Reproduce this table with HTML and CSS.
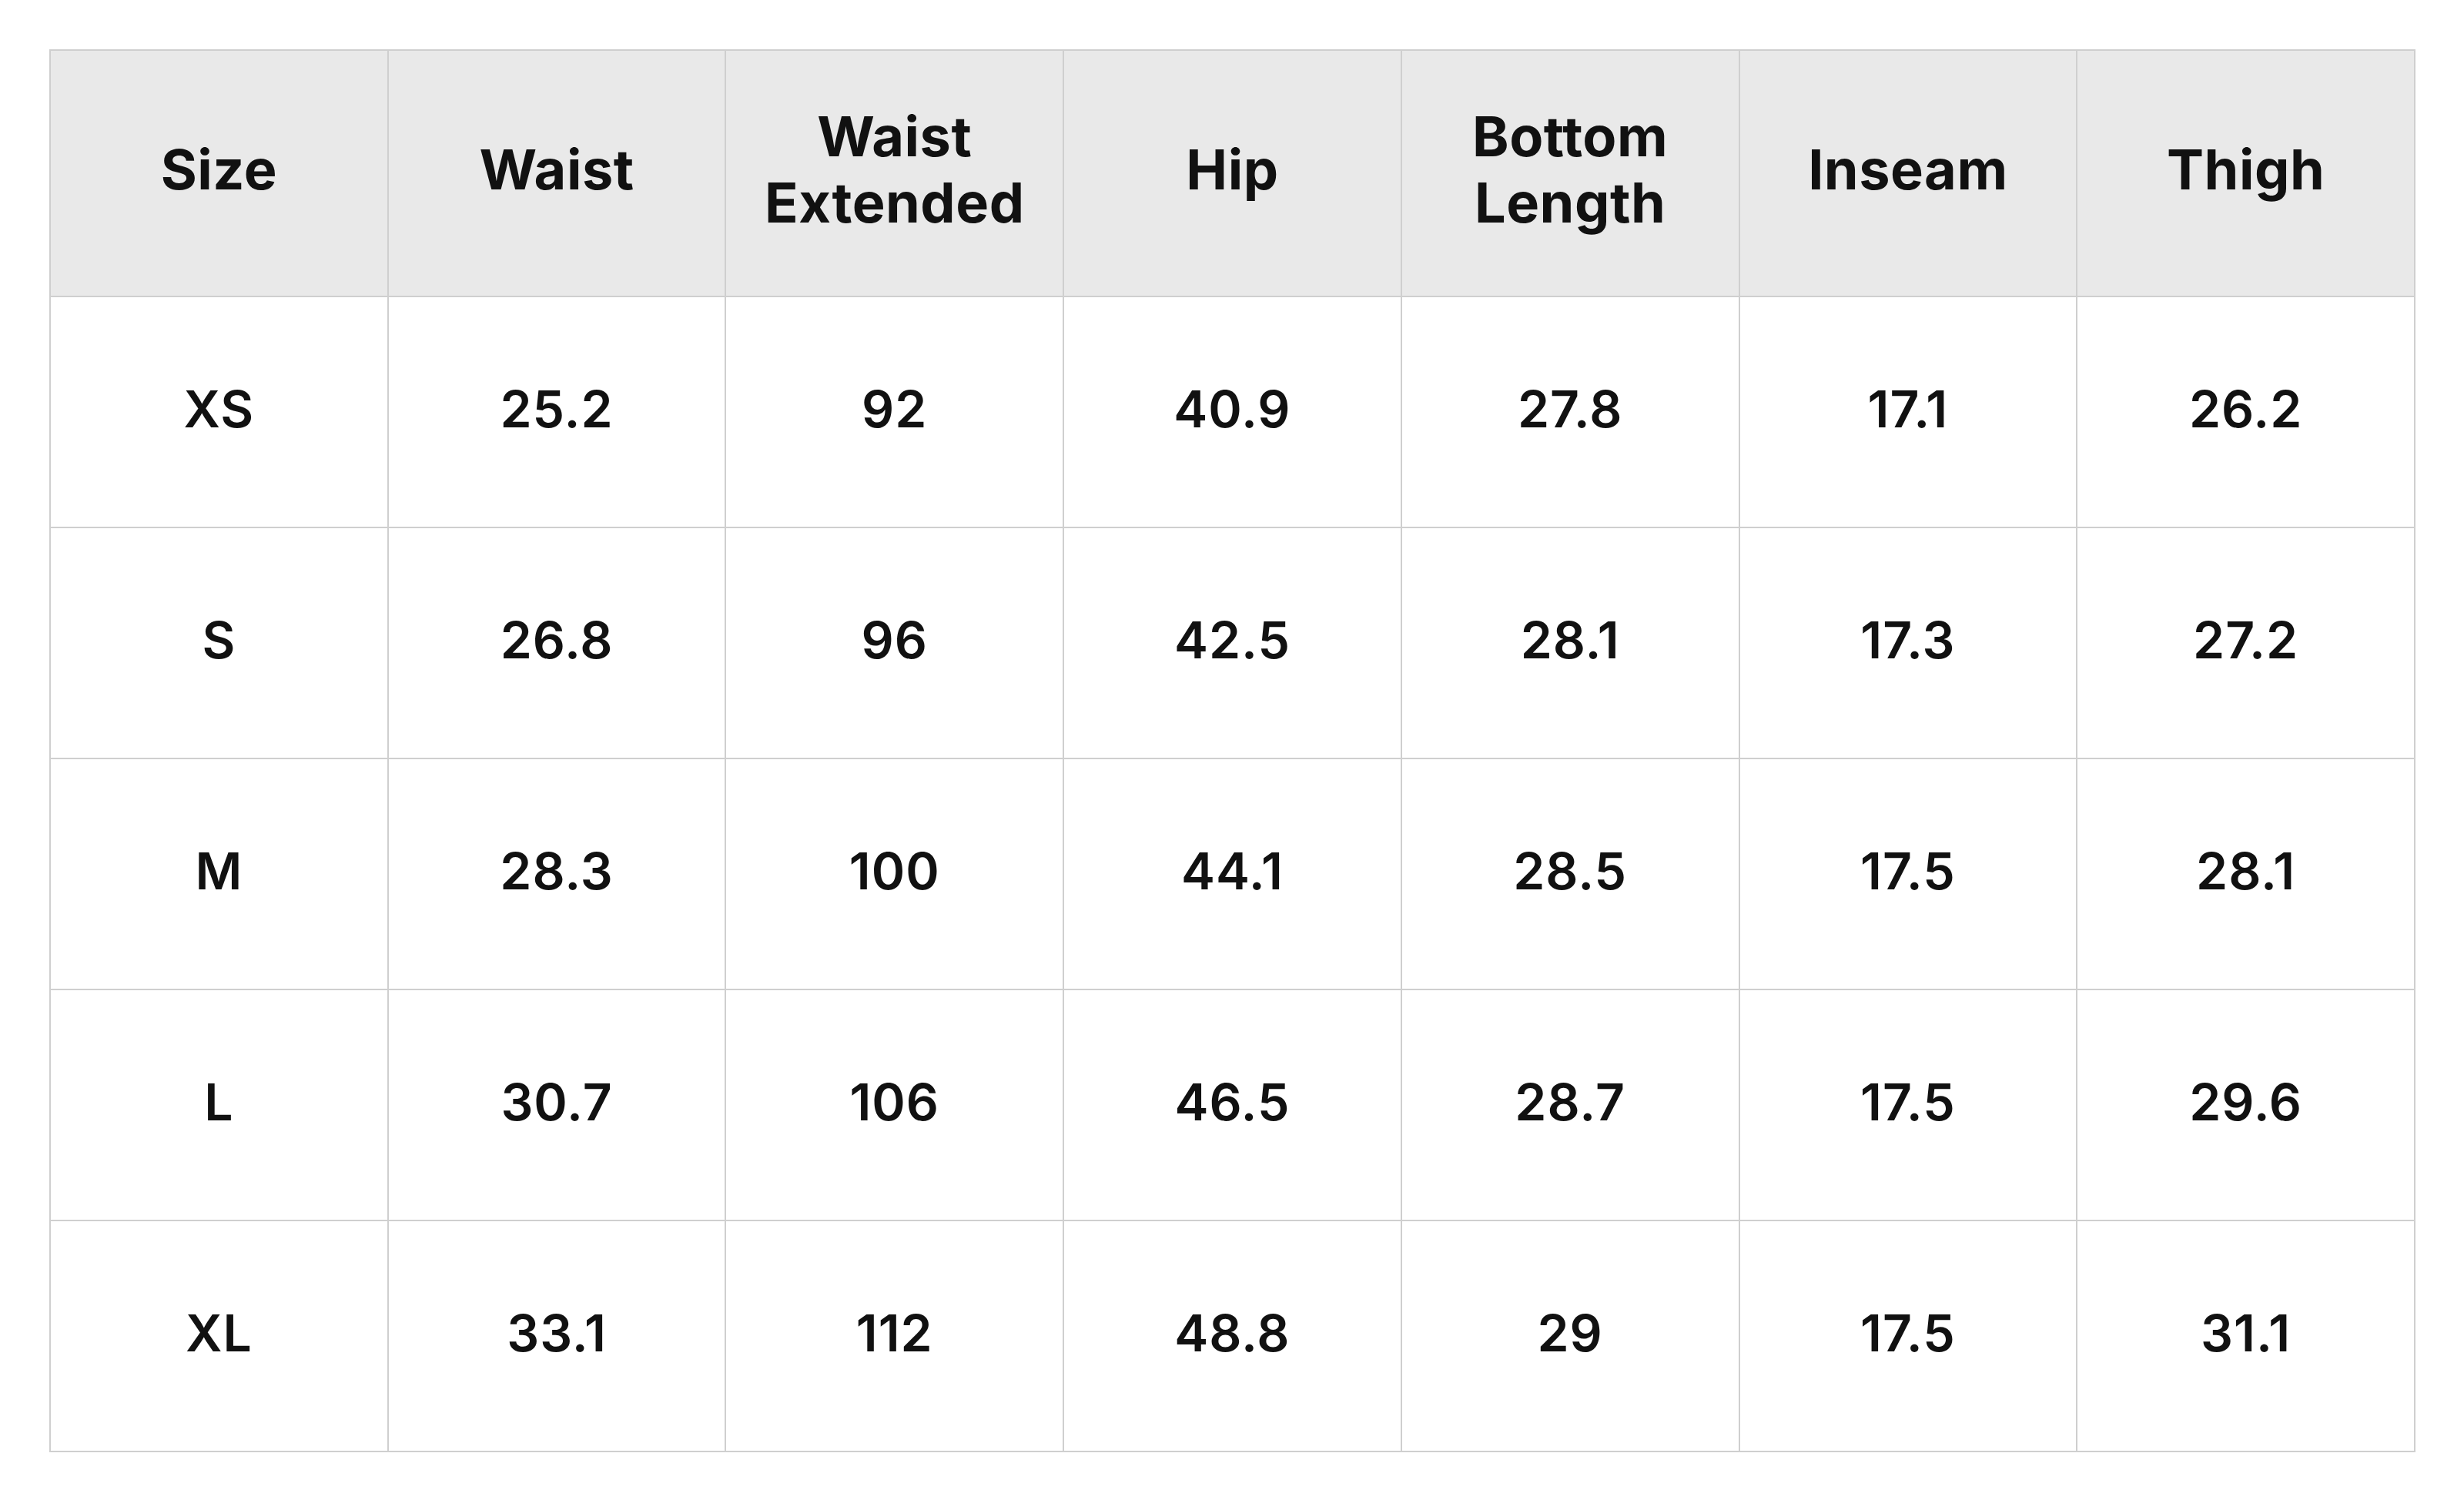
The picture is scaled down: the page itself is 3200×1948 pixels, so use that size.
FILE: index.html
```html
<!DOCTYPE html>
<html lang="en">
<head>
<meta charset="utf-8">
<title>Size Chart</title>
<link rel="stylesheet" href="styles.css">
</head>
<body>
<div class="wrap">
<table class="chart">
  <thead>
    <tr>
      <th>Size</th>
      <th>Waist</th>
      <th>Waist<br>Extended</th>
      <th>Hip</th>
      <th>Bottom<br>Length</th>
      <th>Inseam</th>
      <th>Thigh</th>
    </tr>
  </thead>
  <tbody>
    <tr><td>XS</td><td>25.2</td><td>92</td><td>40.9</td><td>27.8</td><td>17.1</td><td>26.2</td></tr>
    <tr><td>S</td><td>26.8</td><td>96</td><td>42.5</td><td>28.1</td><td>17.3</td><td>27.2</td></tr>
    <tr><td>M</td><td>28.3</td><td>100</td><td>44.1</td><td>28.5</td><td>17.5</td><td>28.1</td></tr>
    <tr><td>L</td><td>30.7</td><td>106</td><td>46.5</td><td>28.7</td><td>17.5</td><td>29.6</td></tr>
    <tr><td>XL</td><td>33.1</td><td>112</td><td>48.8</td><td>29</td><td>17.5</td><td>31.1</td></tr>
  </tbody>
</table>
</div>
</body>
</html>
```
FILE: styles.css
```css
html, body {
  margin: 0;
  padding: 0;
  background: #ffffff;
}
.wrap {
  padding: 64px 63px 64px 64px;
}
.chart {
  width: 100%;
  border-collapse: collapse;
  table-layout: fixed;
  font-family: Inter, "Noto Sans", "Liberation Sans", sans-serif;
  color: #111111;
}
.chart th,
.chart td {
  border: 2px solid #cfcfcf;
  text-align: center;
  vertical-align: middle;
  padding: 0;
}
.chart th {
  background: #e9e9e9;
  height: 307px;
  padding-bottom: 11px;
  font-size: 72px;
  font-weight: 700;
  line-height: 86px;
  letter-spacing: 0.5px;
}
.chart td {
  height: 289px;
  padding-bottom: 9px;
  font-size: 66px;
  font-weight: 600;
  line-height: 80px;
  letter-spacing: 1px;
}
```
